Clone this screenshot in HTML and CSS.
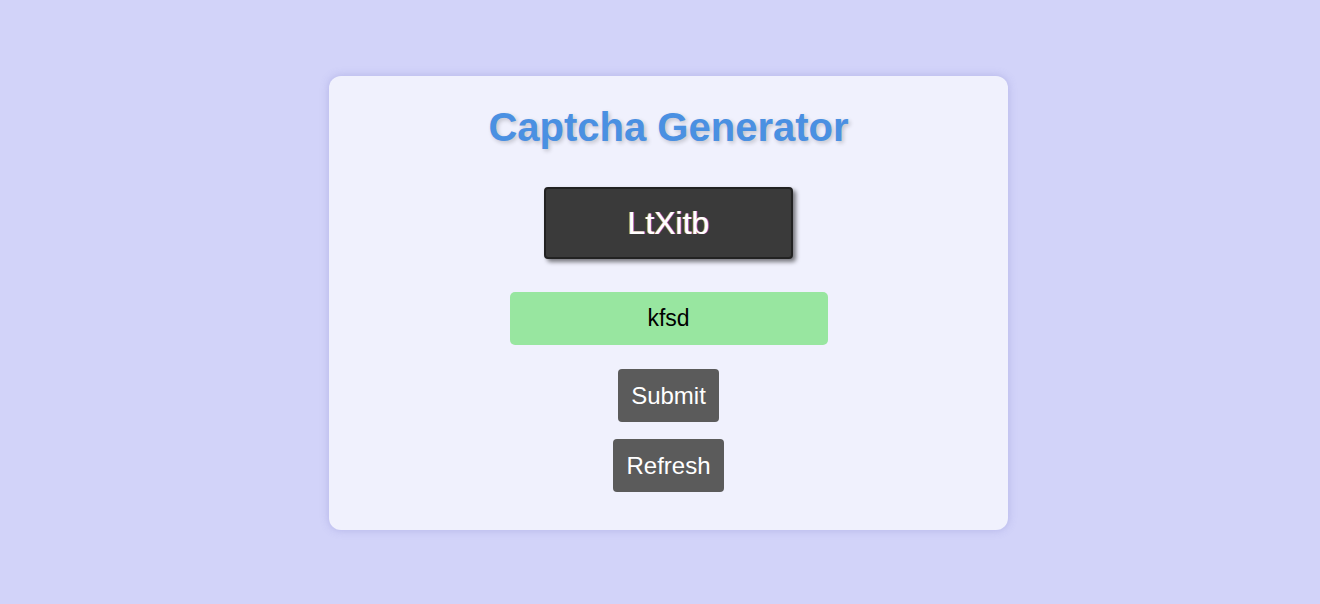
FILE: index.html
```html
<!DOCTYPE html>
<html lang="en">
<head>
<meta charset="UTF-8">
<title>Captcha Generator</title>
<link rel="stylesheet" href="styles.css">
</head>
<body>
<main class="card">
  <h1 class="title">Captcha Generator</h1>
  <div class="captcha">LtXitb</div>
  <input class="answer" type="text" value="kfsd">
  <button class="btn" type="button">Submit</button>
  <button class="btn" type="button">Refresh</button>
</main>
</body>
</html>
```
FILE: styles.css
```css
* { box-sizing: border-box; }
html, body { margin: 0; padding: 0; }
body {
  background: #d2d3f9;
  font-family: "Liberation Sans", Arial, sans-serif;
  height: 604px;
  display: flex;
  justify-content: center;
  padding-top: 76px;
  padding-left: 17px;
}
.card {
  width: 679px;
  height: 454px;
  background: #f0f1fd;
  border-radius: 12px;
  box-shadow: 0 0 8px rgba(120, 120, 200, 0.35);
  display: flex;
  flex-direction: column;
  align-items: center;
  padding-top: 28px;
}
.title {
  margin: 0;
  font-size: 40px;
  line-height: 46px;
  font-weight: bold;
  color: #4a90e2;
  text-shadow: 2px 2px 4px rgba(0, 0, 0, 0.2);
}
.captcha {
  margin-top: 37px;
  width: 249px;
  height: 72px;
  background: #3a3a3a;
  border: 2px solid #222;
  border-radius: 4px;
  box-shadow: 3px 3px 4px rgba(0, 0, 0, 0.5);
  color: #fff;
  font-size: 32px;
  display: flex;
  align-items: center;
  justify-content: center;
  text-shadow: -1px 0 0 rgba(255, 190, 40, 0.8), 1px 0 0 rgba(120, 80, 255, 0.8);
}
.answer {
  margin-top: 33px;
  width: 318px;
  height: 53px;
  border: none;
  border-radius: 5px;
  background: #98e6a0;
  font-family: "Liberation Sans", Arial, sans-serif;
  font-size: 23px;
  text-align: center;
  color: #000;
  padding: 0;
  outline: none;
}
.btn {
  margin-top: 24px;
  height: 53px;
  padding: 0 13px;
  border: none;
  border-radius: 4px;
  background: #5b5b5b;
  color: #fff;
  font-family: "Liberation Sans", Arial, sans-serif;
  font-size: 24px;
}
.btn + .btn { margin-top: 17px; }
```
